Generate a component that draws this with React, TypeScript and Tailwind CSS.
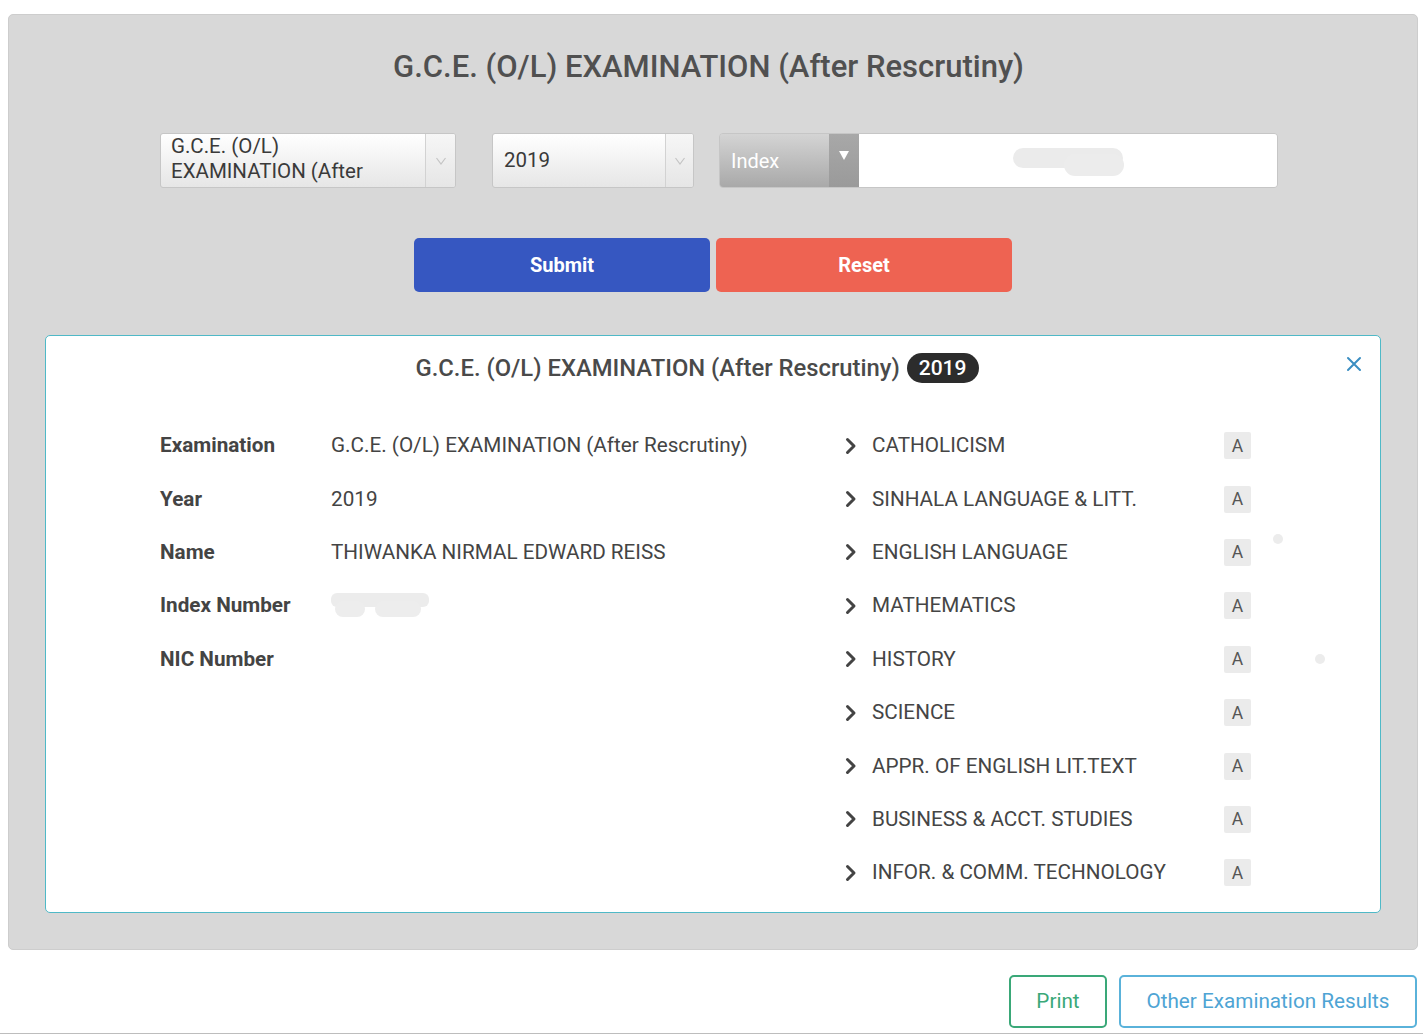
import React from "react";

const subjects = [
  "CATHOLICISM",
  "SINHALA LANGUAGE & LITT.",
  "ENGLISH LANGUAGE",
  "MATHEMATICS",
  "HISTORY",
  "SCIENCE",
  "APPR. OF ENGLISH LIT.TEXT",
  "BUSINESS & ACCT. STUDIES",
  "INFOR. & COMM. TECHNOLOGY",
];

const details = [
  { label: "Examination", value: "G.C.E. (O/L) EXAMINATION (After Rescrutiny)" },
  { label: "Year", value: "2019" },
  { label: "Name", value: "THIWANKA NIRMAL EDWARD REISS" },
  { label: "Index Number", value: null },
  { label: "NIC Number", value: "" },
];

function Chevron() {
  return (
    <svg width="14" height="18" viewBox="0 0 14 18" className="shrink-0">
      <path d="M3.5 2.5 L10 9 L3.5 15.5" fill="none" stroke="#444" strokeWidth="3" strokeLinecap="round" strokeLinejoin="round" />
    </svg>
  );
}

function ThinArrow() {
  return (
    <svg width="12" height="10" viewBox="0 0 12 10">
      <path d="M1.5 2 L6 8 L10.5 2" fill="none" stroke="#c4c4c4" strokeWidth="1.2" />
    </svg>
  );
}

export default function App() {
  return (
    <div className="relative w-[1423px] h-[1034px] bg-white border-b border-[#bdbdbd] overflow-hidden font-['Roboto',sans-serif]">
      <div className="mx-[8px] mt-[14px] w-[1410px] h-[936px] rounded-[5px] bg-[#d8d8d8] border border-[#cdcdcd] pt-[34px]">
        <h1 className="text-center pr-[9px] text-[31px] leading-[36px] font-medium text-[#505050]">
          G.C.E. (O/L) EXAMINATION (After Rescrutiny)
        </h1>

        {/* form row */}
        <div className="flex items-start pl-[151px] mt-[48px]">
          <div className="flex w-[296px] h-[55px] rounded-[3px] border border-[#c6c6c6] bg-gradient-to-b from-white to-[#e6e6e6] overflow-hidden">
            <div className="flex-1 pl-[10px] pt-[0px] text-[20.5px] leading-[25px] text-[#3a3a3a]">
              G.C.E. (O/L)
              <br />
              EXAMINATION (After
            </div>
            <div className="w-[30px] flex items-center justify-center border-l border-[#d2d2d2] bg-gradient-to-b from-[#f6f6f6] to-[#e6e6e6]">
              <ThinArrow />
            </div>
          </div>

          <div className="flex ml-[36px] w-[202px] h-[55px] rounded-[3px] border border-[#c6c6c6] bg-gradient-to-b from-white to-[#e6e6e6] overflow-hidden">
            <div className="flex-1 pl-[11px] flex items-center text-[20.5px] text-[#3a3a3a]">2019</div>
            <div className="w-[28px] flex items-center justify-center border-l border-[#d2d2d2] bg-gradient-to-b from-[#f6f6f6] to-[#e6e6e6]">
              <ThinArrow />
            </div>
          </div>

          <div className="flex ml-[25px] w-[559px] h-[55px] rounded-[4px] border border-[#c6c6c6] overflow-hidden">
            <div className="w-[109px] flex items-center pl-[11px] text-[20px] text-white bg-gradient-to-b from-[#d4d4d4] to-[#a9a9a9]">
              Index
            </div>
            <div className="w-[30px] flex items-start justify-center pt-[17px] bg-gradient-to-b from-[#a8a8a8] to-[#9a9a9a]">
              <svg width="10" height="9" viewBox="0 0 10 9">
                <path d="M0 0 L10 0 L5 9 Z" fill="#ffffff" />
              </svg>
            </div>
            <div className="relative flex-1 bg-white">
              <div className="absolute left-[154px] top-[14px] w-[110px] h-[20px] rounded-full bg-[#ebebeb]" />
              <div className="absolute left-[205px] top-[20px] w-[60px] h-[22px] rounded-full bg-[#ececec]" />
            </div>
          </div>
        </div>

        {/* buttons */}
        <div className="flex justify-center gap-[6px] mt-[50px]">
          <button className="w-[296px] h-[54px] rounded-[5px] bg-[#3657c1] text-white text-[20px] font-bold">Submit</button>
          <button className="w-[296px] h-[54px] rounded-[5px] bg-[#ee6352] text-white text-[20px] font-bold">Reset</button>
        </div>

        {/* result card */}
        <div className="relative mx-[36px] mt-[43px] h-[578px] rounded-[5px] border border-[#4fb9c7] bg-white">
          <div className="flex items-center justify-center pt-[14px] pr-[32px] h-[50px] gap-[7px]">
            <span className="text-[23.8px] leading-[32px] text-[#4a4a4a] font-medium">
              G.C.E. (O/L) EXAMINATION (After Rescrutiny)
            </span>
            <span className="h-[30px] px-[12px] rounded-full bg-[#2c2c2c] text-white text-[21px] leading-[30px] font-medium">2019</span>
          </div>
          <svg width="18" height="18" viewBox="0 0 18 18" className="absolute right-[17px] top-[19px]">
            <path d="M3 3 L15 15 M15 3 L3 15" stroke="#3b8ec2" strokeWidth="2" strokeLinecap="round" />
          </svg>

          <div className="flex mt-[33px] pl-[114px]">
            <div className="w-[682px]">
              {details.map((d) => (
                <div key={d.label} className="flex items-center h-[53.4px]">
                  <div className="w-[171px] text-[20.7px] font-bold text-[#444]">{d.label}</div>
                  <div className="text-[20.7px] text-[#444]">
                    {d.value === null ? (
                      <div className="relative w-[98px] h-[26px]">
                        <div className="absolute left-0 top-0 w-[98px] h-[14px] rounded-[6px] bg-[#ececec]" />
                        <div className="absolute left-[4px] top-[8px] w-[30px] h-[16px] rounded-[8px] bg-[#ededed]" />
                        <div className="absolute left-[44px] top-[8px] w-[46px] h-[16px] rounded-[8px] bg-[#ededed]" />
                      </div>
                    ) : (
                      d.value
                    )}
                  </div>
                </div>
              ))}
            </div>
            <div className="w-[412px]">
              {subjects.map((s) => (
                <div key={s} className="flex items-center h-[53.4px]">
                  <div className="w-[30px] pl-[2px] flex items-center">
                    <Chevron />
                  </div>
                  <div className="w-[352px] text-[20.7px] text-[#454545]">{s}</div>
                  <div className="w-[27px] h-[27px] rounded-[2px] bg-[#ebebeb] flex items-center justify-center text-[17.5px] text-[#555]">A</div>
                </div>
              ))}
            </div>
          </div>

          <div className="absolute left-[1227px] top-[198px] w-[10px] h-[10px] rounded-full bg-[#ececec]" />
          <div className="absolute left-[1269px] top-[318px] w-[10px] h-[10px] rounded-full bg-[#ececec]" />
        </div>
      </div>

      {/* bottom buttons */}
      <div className="flex justify-end gap-[12px] pr-[6px] mt-[25px]">
        <button className="w-[98px] h-[53px] rounded-[5px] border-2 border-[#3aa878] text-[#3aa878] text-[20.7px]">Print</button>
        <button className="w-[298px] h-[53px] rounded-[5px] border-2 border-[#5ab2da] text-[#4ea4d4] text-[20.7px]">Other Examination Results</button>
      </div>
    </div>
  );
}
